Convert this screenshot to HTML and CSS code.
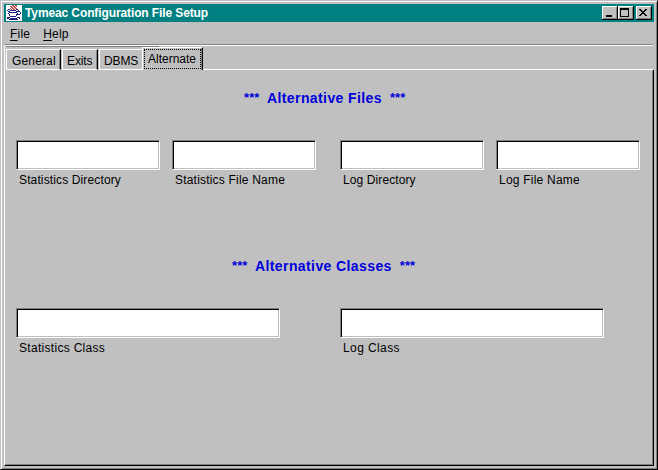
FILE: index.html
```html
<!DOCTYPE html>
<html lang="en">
<head>
<meta charset="utf-8">
<title>Tymeac Configuration File Setup</title>
<link rel="stylesheet" href="styles.css">
</head>
<body>
<div class="window">
  <header class="titlebar">
    <svg class="app-icon" width="16" height="16" viewBox="0 0 16 16" shape-rendering="crispEdges">
      <path fill="#fff" d="M0 0h16v16H0z"/>
      <path fill="none" stroke="#d04848" d="M6 0.5h2M9 0.5h2M4 1.5h2M7 1.5h2M10 1.5h1M5 2.5h2M8 2.5h2M4 3.5h1M6 3.5h2M9 3.5h2M5 4.5h1M7 4.5h2"/>
      <path fill="none" stroke="#1c1c80" d="M2 4.5h2M10 4.5h2M1 5.5h1M4 5.5h6M12 5.5h1M2 6.5h2M10 6.5h4M3 7.5h8M14 7.5h1M2 8.5h1M11 8.5h1M14 8.5h1M3 9.5h1M10 9.5h4M3 10.5h1M10 10.5h1M4 11.5h6M1 12.5h3M11 12.5h3M1 13.5h2M4 13.5h7M13 13.5h1M3 14.5h9"/>
    </svg>
    <h1 class="title">Tymeac Configuration File Setup</h1>
    <div class="controls">
      <button class="control" aria-label="Minimize"><svg width="12" height="10" shape-rendering="crispEdges"><path d="M3 7h6v2H3z"/></svg></button>
      <button class="control" aria-label="Maximize"><svg width="12" height="10" shape-rendering="crispEdges"><path fill-rule="evenodd" d="M1 0h9v9H1zM2 2v6h7V2z"/></svg></button>
      <button class="control close" aria-label="Close"><svg width="12" height="10" shape-rendering="crispEdges"><path d="M2 1h2v1h1v1h2V2h1V1h2v1H9v1H8v1H7v1h1v1h1v1h1v1H8V7H7V6H5v1H4v1H2V7h1V6h1V5h1V4H4V3H3V2H2z"/></svg></button>
    </div>
  </header>
  <nav class="menu"><span class="file"><u>F</u>ile</span><span class="help"><u>H</u>elp</span></nav>
  <div class="tabs">
    <div class="tab general"><span>General</span></div>
    <div class="tab exits"><span>Exits</span></div>
    <div class="tab dbms"><span>DBMS</span></div>
    <div class="tab active"><span>Alternate</span></div>
    <div class="rest"></div>
  </div>
  <main class="panel">
    <h2 class="heading files"><span class="stars">***</span><span class="words">Alternative Files</span><span class="stars">***</span></h2>
    <div class="row four">
      <label class="field"><input type="text"><span class="l1">Statistics Directory</span></label>
      <label class="field"><input type="text"><span class="l2">Statistics File Name</span></label>
      <label class="field"><input type="text"><span class="l3">Log Directory</span></label>
      <label class="field"><input type="text"><span class="l4">Log File Name</span></label>
    </div>
    <h2 class="heading classes"><span class="stars">***</span><span class="words">Alternative Classes</span><span class="stars">***</span></h2>
    <div class="row two">
      <label class="field"><input type="text"><span class="l5">Statistics Class</span></label>
      <label class="field"><input type="text"><span class="l6">Log Class</span></label>
    </div>
  </main>
</div>
</body>
</html>
```
FILE: styles.css
```css
* { box-sizing: border-box; }
body { margin: 0; background: #c0c0c0; font: 12px/14px "Liberation Sans", Arial, sans-serif; color: #000; overflow: hidden; }
.window {
  width: 658px; height: 470px; padding: 3px;
  border: 1px solid; border-color: #c0c0c0 #000 #000 #c0c0c0;
  box-shadow: inset 1px 1px #fff, inset -1px -1px #808080;
  display: flex; flex-direction: column;
}
.titlebar { height: 18px; flex: none; background: #008080; display: flex; align-items: center; padding: 0 2px; }
.app-icon { display: block; }
.title { margin: 0 0 0 3px; color: #fff; font-size: 12px; line-height: 18px; font-weight: bold; letter-spacing: -.11px; white-space: nowrap; }
.controls { margin-left: auto; display: flex; }
.control { width: 16px; height: 14px; padding: 1px; border: 0; background: #c0c0c0; box-shadow: inset -1px -1px #000, inset 1px 1px #fff, inset -2px -2px #808080; }
.control svg { display: block; }
.close { margin-left: 2px; }
.menu { height: 24px; flex: none; margin: 0 1px; border-bottom: 1px solid #fff; box-shadow: inset 0 -1px #808080; display: flex; padding: 5px 0 0 5px; gap: 13px; letter-spacing: .2px; }
.menu u { text-underline-offset: 2px; text-decoration-thickness: 1px; }
.tabs { height: 24px; flex: none; display: flex; align-items: flex-end; padding-left: 2px; background: linear-gradient(#808080, #808080) 1px 0 / 153px 1px no-repeat; border-left: 1px solid #fff; padding-left: 1px; }
.tab { height: 21px; flex: none; border-top: 1px solid #fff; border-left: 1px solid #fff; border-right: 1px solid #000; box-shadow: inset -1px 0 #808080; border-bottom: 1px solid #fff; padding: 4px 0 0 5px; white-space: nowrap; }
.general { width: 55px; letter-spacing: .15px; }
.exits { width: 36px; margin-left: 1px; padding-left: 4px; letter-spacing: -.1px; }
.dbms { width: 43px; margin-left: 1px; padding-left: 4px; border-right: 0; box-shadow: none; letter-spacing: -.1px; }
.active { width: 61px; height: 23px; border-bottom: 0; padding: 1px; }
.active span { display: block; width: 57px; height: 20px; border: 1px dotted #000; padding: 2px 0 0 3px; }
.rest { flex: 1; border-bottom: 1px solid #fff; margin-right: 1px; }
.panel { flex: 1; border-left: 1px solid #fff; border-right: 1px solid #000; border-bottom: 1px solid #000; box-shadow: inset -1px -1px #808080; }
.heading { margin: 0; color: #0000dc; font-size: 14px; line-height: 16px; height: 16px; display: flex; white-space: nowrap; }
.files { margin: 20px 0 0 239px; }
.classes { margin: 70px 0 0 227px; }
.stars { width: 23px; font-size: 13px; letter-spacing: .1px; }
.words { margin-right: 8px; letter-spacing: .4px; }
.row { display: flex; padding-left: 11px; }
.four { margin-top: 34px; height: 48px; }
.two { margin-top: 34px; }
.field { display: block; flex: none; width: 144px; margin-right: 12px; }
.field:nth-child(2) { margin-right: 24px; }
.two .field { width: 264px; margin-right: 60px; }
.two .field:last-child { margin-right: 0; }
.field input { display: block; width: 100%; height: 30px; border: 1px solid; border-color: #808080 #fff #fff #808080; box-shadow: inset 1px 1px #000, inset -1px -1px #c0c0c0; padding: 2px; border-radius: 0; outline: 0; }
.field span { display: block; margin: 3px 0 0 3px; white-space: nowrap; }
.l1 { letter-spacing: .13px; }
.l2 { letter-spacing: .2px; }
.l3 { letter-spacing: .1px; }
.l4 { letter-spacing: .22px; }
.l5 { letter-spacing: .3px; }
.l6 { letter-spacing: .4px; }
```
